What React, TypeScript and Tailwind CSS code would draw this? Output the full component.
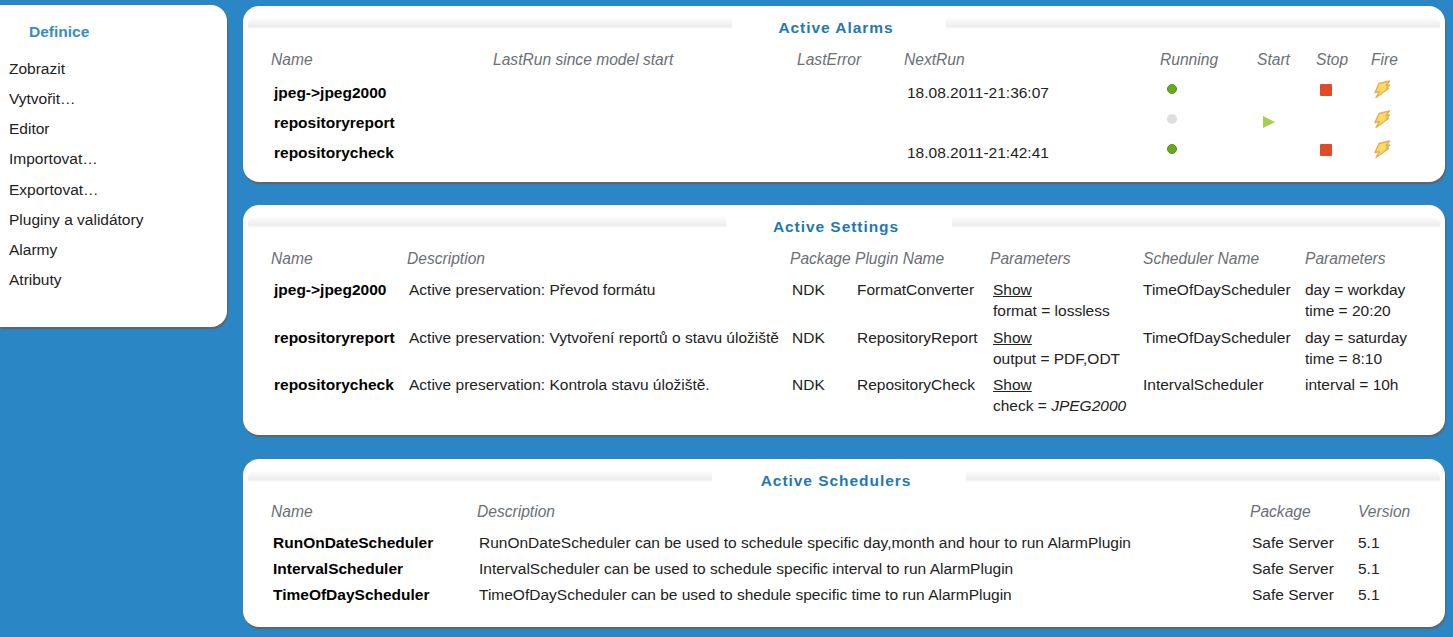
import type { ReactNode } from 'react';

const menuItems = ['Zobrazit', 'Vytvořit…', 'Editor', 'Importovat…', 'Exportovat…', 'Pluginy a validátory', 'Alarmy', 'Atributy'];

const alarmCols = 'grid grid-cols-[222px_304px_107px_256px_97px_59px_55px_1fr]';
const settingCols = 'grid grid-cols-[136px_383px_65px_135px_153px_162px_1fr]';
const schedulerCols = 'grid grid-cols-[206px_773px_108px_1fr]';

const alarms = [
  { name: 'jpeg->jpeg2000', next: '18.08.2011-21:36:07', running: true },
  { name: 'repositoryreport', next: '', running: false },
  { name: 'repositorycheck', next: '18.08.2011-21:42:41', running: true },
];

const settings = [
  {
    name: 'jpeg->jpeg2000',
    desc: 'Active preservation: Převod formátu',
    plugin: 'FormatConverter',
    param: <>format = lossless</>,
    scheduler: 'TimeOfDayScheduler',
    sched: ['day = workday', 'time = 20:20'],
  },
  {
    name: 'repositoryreport',
    desc: 'Active preservation: Vytvoření reportů o stavu úložiště',
    plugin: 'RepositoryReport',
    param: <>output = PDF,ODT</>,
    scheduler: 'TimeOfDayScheduler',
    sched: ['day = saturday', 'time = 8:10'],
  },
  {
    name: 'repositorycheck',
    desc: 'Active preservation: Kontrola stavu úložiště.',
    plugin: 'RepositoryCheck',
    param: <>check = <i>JPEG2000</i></>,
    scheduler: 'IntervalScheduler',
    sched: ['interval = 10h'],
  },
];

const schedulers = [
  ['RunOnDateScheduler', 'RunOnDateScheduler can be used to schedule specific day,month and hour to run AlarmPlugin'],
  ['IntervalScheduler', 'IntervalScheduler can be used to schedule specific interval to run AlarmPlugin'],
  ['TimeOfDayScheduler', 'TimeOfDayScheduler can be used to shedule specific time to run AlarmPlugin'],
];

function Panel({ title, titleWidth, height, children }: { title: string; titleWidth: string; height: string; children: ReactNode }) {
  return (
    <section className={`${height} rounded-[16px] bg-white shadow-[1px_2px_1px_#5f6468] overflow-hidden`}>
      <div className="mx-[5px] mt-[11px] h-[12px] rounded-t-[8px] bg-[linear-gradient(to_bottom,#ffffff,#ededed_78%,#ffffff)] flex justify-center pr-[10px]">
        <div className={`${titleWidth} h-full bg-white`} />
      </div>
      <h2 className="-mt-[11px] pr-[16px] text-center text-[15.5px] leading-[20px] font-bold tracking-[0.95px] text-[#1f78b4]">{title}</h2>
      {children}
    </section>
  );
}

function Head({ labels, cols }: { labels: string[]; cols: string }) {
  return (
    <div className={`${cols} pl-[28px] text-[15.6px] leading-[20px] italic text-[#6a6f75]`}>
      {labels.map((label, i) => (
        <span key={i} className="whitespace-nowrap">{label}</span>
      ))}
    </div>
  );
}

function Bolt() {
  return (
    <svg width="20" height="19" viewBox="0 0 20 19" className="ml-[1px]">
      <path
        d="M7 3.5 L17.5 1 L14 5.5 L17.5 5 L14.5 8.5 L16.5 8.5 L4 17.5 L7.5 11.5 L3 12.5 Z"
        fill="#fbdb62"
        stroke="#e8ad55"
        strokeWidth="1.4"
        strokeLinejoin="round"
      />
    </svg>
  );
}

function AlarmRow({ name, next, running }: { name: string; next: string; running: boolean }) {
  return (
    <div className={`${alarmCols} pl-[28px] h-[30px] items-center text-[15.5px] text-[#222]`}>
      <span className="pl-[3px] font-bold text-black">{name}</span>
      <span />
      <span />
      <span className="pl-[3px] whitespace-nowrap">{next}</span>
      <span className="pl-[7px] -mt-[8px]">
        <span className={`block size-[10px] rounded-full ${running ? 'bg-[#6aaa1e] border border-[#4f9410]' : 'bg-[#dedede]'}`} />
      </span>
      <span className="pl-[5px] -mt-[3px]">
        {!running && (
          <svg width="14" height="14" viewBox="0 0 14 14">
            <path d="M1 1 L13 7 L1 13 Z" fill="#a4cf4a" />
          </svg>
        )}
      </span>
      <span className="pl-[4px] -mt-[6px]">
        {running && <span className="block size-[12px] rounded-[1px] bg-[#e04a26]" />}
      </span>
      <span className="-mt-[8px]">
        <Bolt />
      </span>
    </div>
  );
}

function SettingRow({ row }: { row: (typeof settings)[number] }) {
  return (
    <div className={`${settingCols} pl-[28px] h-[47.5px] text-[15.5px] leading-[21px] text-[#222]`}>
      <span className="pl-[3px] font-bold text-black whitespace-nowrap">{row.name}</span>
      <span className="pl-[2px] whitespace-nowrap">{row.desc}</span>
      <span className="pl-[2px]">NDK</span>
      <span className="pl-[2px] whitespace-nowrap">{row.plugin}</span>
      <div className="pl-[3px] whitespace-nowrap">
        <div className="underline">Show</div>
        <div>{row.param}</div>
      </div>
      <span className="whitespace-nowrap">{row.scheduler}</span>
      <div className="whitespace-nowrap">
        {row.sched.map((line) => (
          <div key={line}>{line}</div>
        ))}
      </div>
    </div>
  );
}

export default function App() {
  return (
    <div className="flex h-[637px] w-[1453px] overflow-hidden bg-[#2a86c4] font-['Liberation_Sans',Arial,sans-serif]">
      <aside className="mt-[5px] h-[322px] w-[227px] shrink-0 rounded-r-[16px] bg-white shadow-[1px_2px_1px_#5f6468]">
        <h3 className="pl-[29px] pt-[17px] text-[15.5px] leading-[20px] font-bold text-[#3b8bc4]">Definice</h3>
        <nav className="mt-[12px] flex flex-col pl-[9px] text-[15.5px] text-[#222]">
          {menuItems.map((item) => (
            <span key={item} className="h-[30.15px] leading-[30px]">{item}</span>
          ))}
        </nav>
      </aside>

      <main className="ml-[16px] flex w-[1202px] flex-col pt-[6px]">
        <Panel title="Active Alarms" titleWidth="w-[214px]" height="h-[176px]">
          <div className="mt-[12px]">
            <Head cols={alarmCols} labels={['Name', 'LastRun since model start', 'LastError', 'NextRun', 'Running', 'Start', 'Stop', 'Fire']} />
          </div>
          <div className="mt-[8px]">
            {alarms.map((a) => (
              <AlarmRow key={a.name} {...a} />
            ))}
          </div>
        </Panel>

        <div className="mt-[23px]">
          <Panel title="Active Settings" titleWidth="w-[226px]" height="h-[230px]">
            <div className="mt-[12px]">
              <Head cols={settingCols} labels={['Name', 'Description', 'Package', 'Plugin Name', 'Parameters', 'Scheduler Name', 'Parameters']} />
            </div>
            <div className="mt-[10px]">
              {settings.map((s) => (
                <SettingRow key={s.name} row={s} />
              ))}
            </div>
          </Panel>
        </div>

        <div className="mt-[24px]">
          <Panel title="Active Schedulers" titleWidth="w-[254px]" height="h-[168px]">
            <div className="mt-[11px]">
              <Head cols={schedulerCols} labels={['Name', 'Description', 'Package', 'Version']} />
            </div>
            <div className="mt-[8px]">
              {schedulers.map(([name, desc]) => (
                <div key={name} className={`${schedulerCols} pl-[28px] h-[26px] items-center text-[15.5px] text-[#222]`}>
                  <span className="pl-[2px] font-bold text-black">{name}</span>
                  <span className="pl-[2px] whitespace-nowrap">{desc}</span>
                  <span className="pl-[2px]">Safe Server</span>
                  <span>5.1</span>
                </div>
              ))}
            </div>
          </Panel>
        </div>
      </main>
    </div>
  );
}
